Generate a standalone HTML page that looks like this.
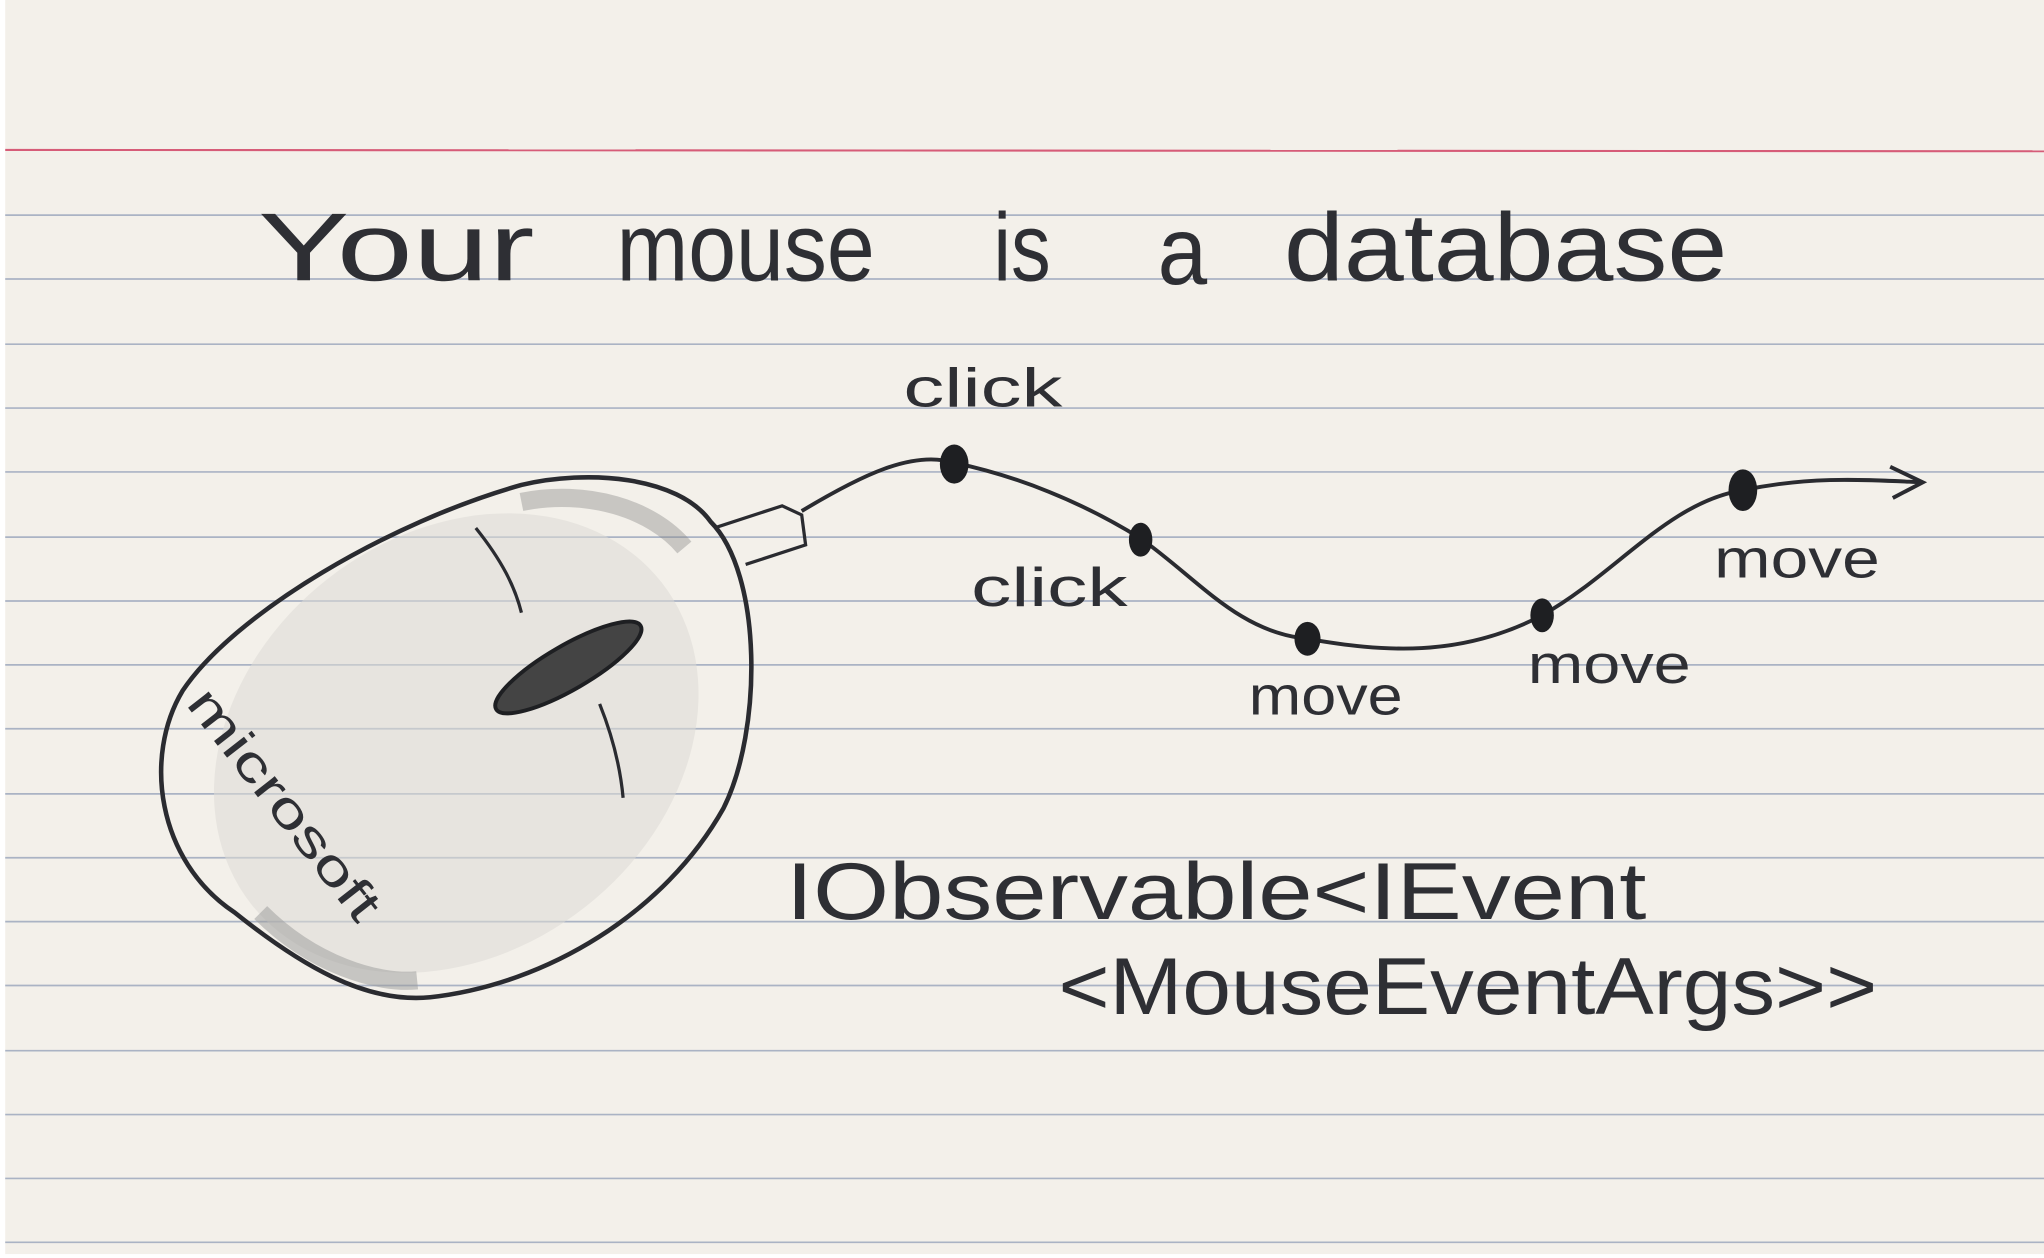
<!DOCTYPE html>
<html><head><meta charset="utf-8"><style>
html,body{margin:0;padding:0;background:#fff;}
svg{display:block;}
text{font-family:"Liberation Sans",sans-serif;fill:#2e2f34;}
</style></head><body>
<svg width="2044" height="1258" viewBox="0 0 1568 965" xmlns="http://www.w3.org/2000/svg">
<rect x="4" y="0" width="1564" height="962" fill="#f3f0ea"/>
<line x1="4" y1="115" x2="1568" y2="116" stroke="#d65c78" stroke-width="1.6"/>
<g stroke="#aab3c4" stroke-width="1.3">
<line x1="4" y1="165" x2="1568" y2="165"/><line x1="4" y1="214" x2="1568" y2="214"/>
<line x1="4" y1="264" x2="1568" y2="264"/><line x1="4" y1="313" x2="1568" y2="313"/>
<line x1="4" y1="362" x2="1568" y2="362"/><line x1="4" y1="412" x2="1568" y2="412"/>
<line x1="4" y1="461" x2="1568" y2="461"/><line x1="4" y1="510" x2="1568" y2="510"/>
<line x1="4" y1="559" x2="1568" y2="559"/><line x1="4" y1="609" x2="1568" y2="609"/>
<line x1="4" y1="658" x2="1568" y2="658"/><line x1="4" y1="707" x2="1568" y2="707"/>
<line x1="4" y1="756" x2="1568" y2="756"/><line x1="4" y1="806" x2="1568" y2="806"/>
<line x1="4" y1="855" x2="1568" y2="855"/><line x1="4" y1="904" x2="1568" y2="904"/>
<line x1="4" y1="953" x2="1568" y2="953"/>
</g>
<!-- title -->
<g font-size="74">
<text x="198" y="215" textLength="212" lengthAdjust="spacingAndGlyphs">Your</text>
<text x="473" y="215" textLength="198" lengthAdjust="spacingAndGlyphs">mouse</text>
<text x="762" y="215" textLength="44" lengthAdjust="spacingAndGlyphs">is</text>
<text x="888" y="218" textLength="38" lengthAdjust="spacingAndGlyphs">a</text>
<text x="985" y="215" textLength="340" lengthAdjust="spacingAndGlyphs">database</text>
</g>
<!-- mouse -->
<ellipse cx="350" cy="570" rx="200" ry="160" transform="rotate(-38 350 570)" fill="#dcdad6" opacity="0.55"/>
<path d="M200 700 C240 740,290 755,320 752" fill="none" stroke="#999" stroke-width="14" opacity="0.5"/>
<path d="M400 385 C450 375,500 390,525 420" fill="none" stroke="#888" stroke-width="14" opacity="0.4"/>
<path d="M545 400 C520 365,450 360,400 372 C300 400,180 470,140 530 C110 580,120 660,180 700 C230 740,280 770,330 765 C420 755,510 700,555 620 C585 560,585 440,545 400 Z" fill="none" stroke="#2a2b30" stroke-width="3.5"/>
<path d="M548 405 L600 388 L615 395 L618 418 L572 433" fill="none" stroke="#2a2b30" stroke-width="2.5"/>
<path d="M365 405 C385 430,395 450,400 470" fill="none" stroke="#2a2b30" stroke-width="2.5"/>
<path d="M460 540 C470 565,476 590,478 612" fill="none" stroke="#2a2b30" stroke-width="2.5"/>
<ellipse cx="436" cy="512" rx="64" ry="17" transform="rotate(-30 436 512)" fill="#444" stroke="#1e1f22" stroke-width="3"/>
<text x="0" y="0" font-size="38" transform="translate(142 540) rotate(52)" textLength="215" lengthAdjust="spacingAndGlyphs">microsoft</text>
<!-- curve -->
<path d="M615 392 C660 365,700 345,732 355 C780 365,830 385,875 413 C920 445,950 485,1003 490 C1060 500,1120 505,1183 472 C1240 440,1280 385,1337 376 C1390 365,1430 368,1475 370" fill="none" stroke="#2a2b30" stroke-width="3"/>
<path d="M1450 358 L1475 370 L1452 382" fill="none" stroke="#2a2b30" stroke-width="3"/>
<g fill="#1e1f22"><ellipse cx="732" cy="356" rx="11" ry="15"/><ellipse cx="875" cy="414" rx="9" ry="13"/><ellipse cx="1003" cy="490" rx="10" ry="13"/><ellipse cx="1183" cy="472" rx="9" ry="13"/><ellipse cx="1337" cy="376" rx="11" ry="16"/></g>
<g font-size="42">
<text x="693" y="312" textLength="122" lengthAdjust="spacingAndGlyphs">click</text>
<text x="745" y="465" textLength="120" lengthAdjust="spacingAndGlyphs">click</text>
<text x="958" y="548" textLength="118" lengthAdjust="spacingAndGlyphs">move</text>
<text x="1172" y="524" textLength="125" lengthAdjust="spacingAndGlyphs">move</text>
<text x="1315" y="443" textLength="127" lengthAdjust="spacingAndGlyphs">move</text>
</g>
<g font-size="62">
<text x="603" y="705" textLength="660" lengthAdjust="spacingAndGlyphs">IObservable&lt;IEvent</text>
<text x="812" y="778" textLength="628" lengthAdjust="spacingAndGlyphs">&lt;MouseEventArgs&gt;&gt;</text>
</g>
</svg>
</body></html>
